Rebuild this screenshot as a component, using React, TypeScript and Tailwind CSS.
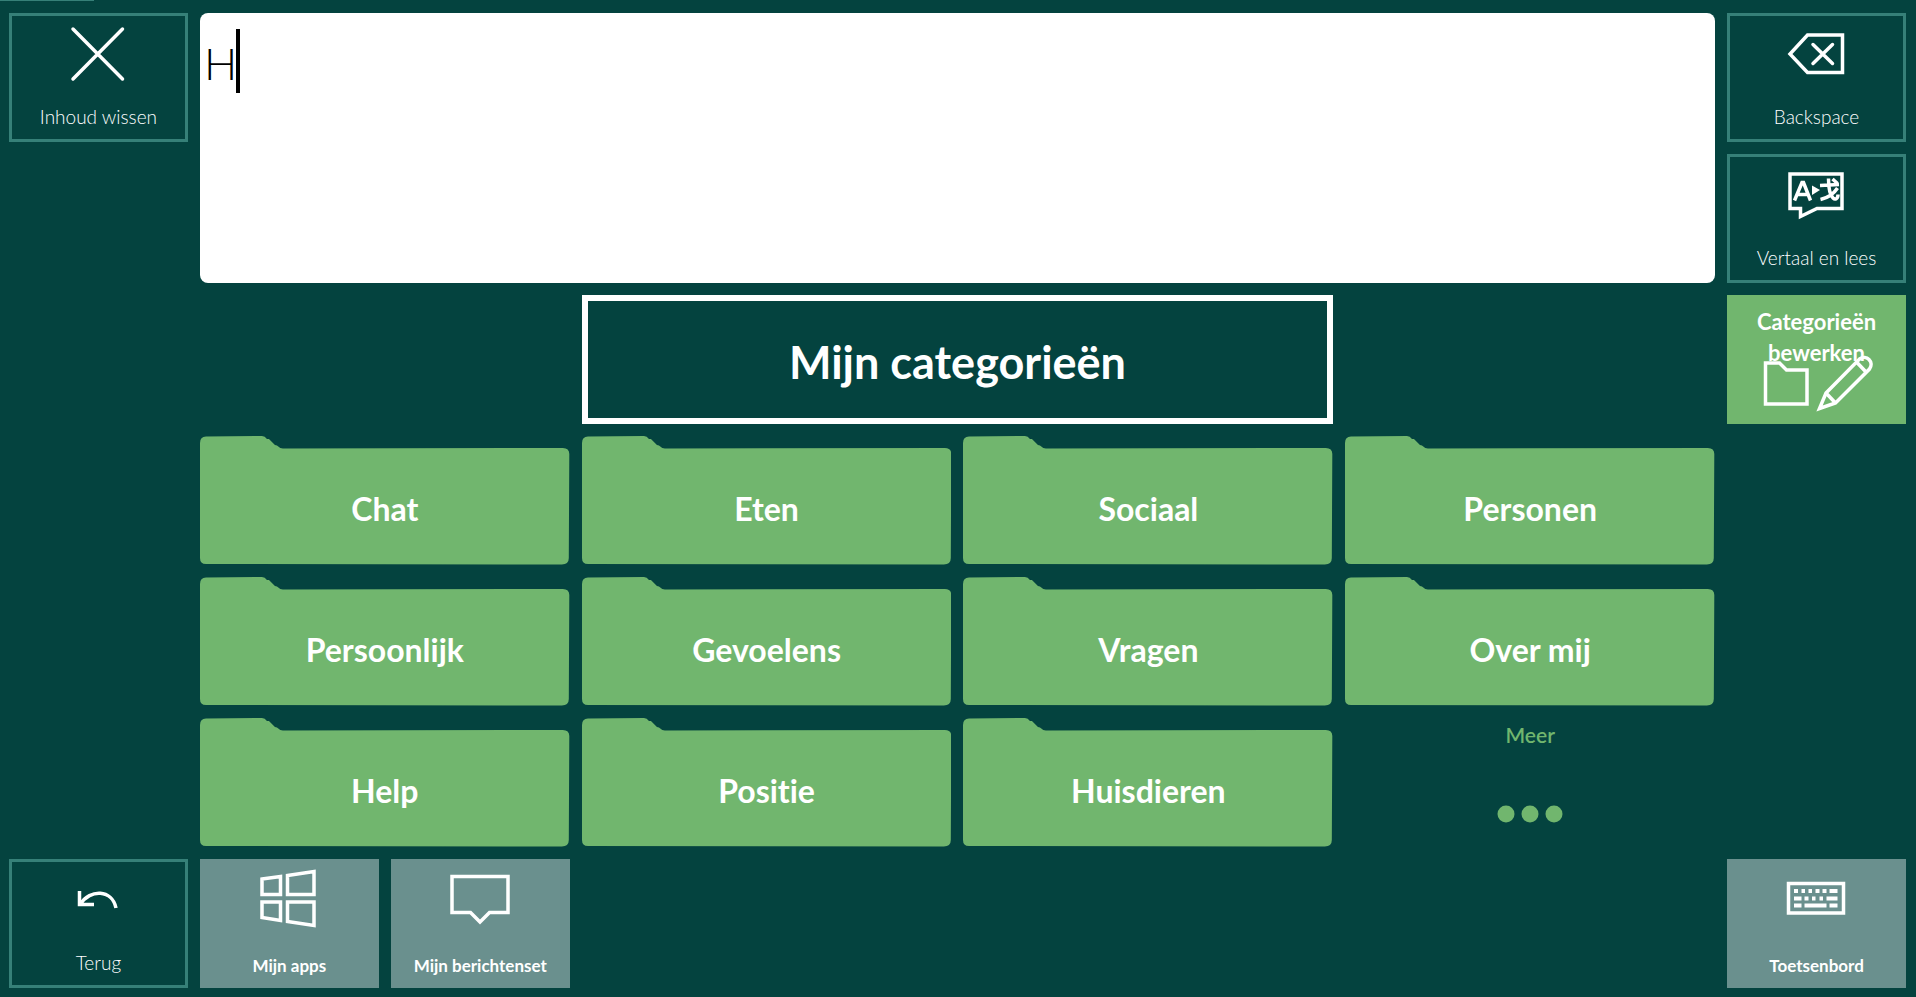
import React, { useState } from "react";

type TileProps = {
  label: string;
  icon: React.ReactNode;
  place: string;
};

function OutlineTile({ label, icon, place }: TileProps) {
  return (
    <button
      type="button"
      className={`flex flex-col items-center justify-between border-3 border-[#368078] pt-2 pb-[10px] text-[19px] leading-6 font-light ${place}`}
    >
      {icon}
      <span>{label}</span>
    </button>
  );
}

function SolidTile({ label, icon, place }: TileProps) {
  return (
    <button
      type="button"
      className={`flex flex-col items-center justify-between bg-[#6a908e] pt-2 pb-[10px] text-[17px] leading-6 font-bold ${place}`}
    >
      {icon}
      <span>{label}</span>
    </button>
  );
}

function Folder({ label }: { label: string }) {
  return (
    <button type="button" className="col-span-2 grid">
      <svg
        viewBox="0 0 370 129"
        preserveAspectRatio="none"
        className="h-full min-h-0 w-full [grid-area:1/1]"
        aria-hidden="true"
      >
        <path
          fill="#71b66e"
          d="M0 7Q0 .5 6 .5L62 0Q65 0 67 3L69 3L75 9L77 9.500Q80 12.500 83 12.500L363 12Q369.500 12 369.500 18L369 122Q369 128.500 362 128.500L6 128Q0 128 0 122Z"
        />
      </svg>
      <span className="self-center pt-4 text-[32px] leading-10 font-bold [grid-area:1/1]">
        {label}
      </span>
    </button>
  );
}

const iconProps = {
  width: 64,
  height: 64,
  viewBox: "0 0 64 64",
  fill: "none",
  stroke: "#fff",
  strokeWidth: 3.5,
  "aria-hidden": true,
} as const;

const CloseIcon = () => (
  <svg {...iconProps}>
    <path strokeLinecap="round" d="M7 5L56.500 55M56.500 5L7 55" />
  </svg>
);

const BackspaceIcon = () => (
  <svg {...iconProps}>
    <path d="M22.500 11H57.500V48.500H22.500L5 30Z" />
    <path strokeLinecap="round" d="M28 20.500L47.500 39.500M47.500 20.500L28 39.500" />
  </svg>
);

const TranslateIcon = () => (
  <svg {...iconProps}>
    <path d="M5 9H57V43.500H32L15.500 51.500V43.500H5Z" />
    <path d="M9.500 35.500L17 17.500H18.500L25.500 35.500M12 29.500H23" />
    <path fill="#fff" stroke="none" d="M27 20.500L35 25L27 30Z" />
    <path d="M35 20.500L54 19.500M43.500 13.500C43.500 22 44 29 48 33C50 35 53 34 53 29.500M52.500 23C48 30 42 33 35.500 34.500M47.500 14L52.500 18.500" />
  </svg>
);

const UndoIcon = () => (
  <svg {...iconProps}>
    <path d="M13.500 21V34.500H28" />
    <path d="M14.500 34C24 19 46 19 50 38" />
  </svg>
);

const WindowsIcon = () => (
  <svg {...iconProps}>
    <path d="M5 12L23.500 9.500V27.500H5ZM30.500 8.500L57 4.500V27.500H30.500ZM5 35H23.500V53.500L5 50.500ZM30.500 35H57V58.500L30.500 54.500Z" />
  </svg>
);

const MessageIcon = () => (
  <svg {...iconProps}>
    <path d="M4 9.500H60V45.500H41.500L32 55L22.500 45.500H4Z" />
  </svg>
);

const KeyboardIcon = () => (
  <svg {...iconProps}>
    <path d="M3.500 16.500H58.500V46H3.500Z" />
    <g strokeWidth="4">
      <path d="M9 24H13M16.500 24H20M23.500 24H27M30.500 24H34.500M37.500 24H41.500M44.500 24H52.500" />
      <path d="M9 31.500H16.500M19.500 31.500H23.500M27 31.500H30.500M34.500 31.500H38M41.500 31.500H52.500" />
      <path d="M9 38.500H16.500M19.500 38.500H41.500M44.500 38.500H52.500" />
    </g>
  </svg>
);

const EditCategoriesIcon = () => (
  <svg
    width="112"
    height="60"
    viewBox="0 0 112 60"
    fill="none"
    stroke="#fff"
    strokeWidth="3.500"
    aria-hidden="true"
  >
    <path d="M4.500 11H18.500L25.500 18H46V52H4.500Z" />
    <path d="M65 41L98.500 7C105.500 2 113.500 10 108.500 17L74.500 51L58.500 56.500ZM65 41L74.500 51M95.500 10L105 20" />
  </svg>
);

const categories = [
  "Chat",
  "Eten",
  "Sociaal",
  "Personen",
  "Persoonlijk",
  "Gevoelens",
  "Vragen",
  "Over mij",
  "Help",
  "Positie",
  "Huisdieren",
];

export default function App() {
  const [message, setMessage] = useState("H");

  return (
    <div className="relative bg-[#04433f] font-[Lato,'Noto_Sans',sans-serif] text-white [font-variant-ligatures:none]">
      <div className="absolute top-0 left-0 h-px w-[94px] bg-[#368078]" />
      <main className="grid min-h-screen grid-cols-10 grid-rows-7 gap-3 pt-[13px] pr-[10px] pb-[9px] pl-[9px]">
        <OutlineTile label="Inhoud wissen" icon={<CloseIcon />} place="col-start-1 row-start-1" />
        <div className="relative col-span-8 col-start-2 row-span-2 row-start-1">
          <textarea
            aria-label="Bericht"
            spellCheck={false}
            value={message}
            onChange={(e) => setMessage(e.target.value)}
            className="block h-full w-full resize-none rounded-lg bg-white px-1 pt-[18px] pb-4 text-[44px] leading-16 font-light text-black caret-transparent outline-none"
          />
          <span className="absolute top-4 left-9 h-16 w-1 bg-black" />
        </div>
        <OutlineTile label="Backspace" icon={<BackspaceIcon />} place="col-start-10 row-start-1" />
        <OutlineTile label="Vertaal en lees" icon={<TranslateIcon />} place="col-start-10 row-start-2" />

        <h1 className="col-span-4 col-start-4 row-start-3 flex items-center justify-center border-6 border-white pt-1 text-[45px] leading-14 font-bold">
          Mijn categorieën
        </h1>
        <button
          type="button"
          className="col-start-10 row-start-3 flex flex-col items-center bg-[#71b66e] pt-[11px] text-[22px] leading-[31px] font-bold"
        >
          <span>
            Categorieën
            <br />
            bewerken
          </span>
          <span className="-mt-4">
            <EditCategoriesIcon />
          </span>
        </button>

        <div className="col-span-8 col-start-2 row-span-3 row-start-4 grid grid-cols-subgrid grid-rows-subgrid">
          {categories.map((name) => (
            <Folder key={name} label={name} />
          ))}
          <button
            type="button"
            className="col-span-2 flex flex-col items-center justify-between pt-[3px] pb-6 text-[21px] leading-7 font-semibold text-[#71b66e]"
          >
            <span>Meer</span>
            <svg width="66" height="18" viewBox="0 0 66 18" fill="#71b66e" aria-hidden="true">
              <circle cx="9" cy="9" r="8.500" />
              <circle cx="33" cy="9" r="8.500" />
              <circle cx="57" cy="9" r="8.500" />
            </svg>
          </button>
        </div>

        <OutlineTile label="Terug" icon={<UndoIcon />} place="col-start-1 row-start-7" />
        <SolidTile label="Mijn apps" icon={<WindowsIcon />} place="col-start-2 row-start-7" />
        <SolidTile label="Mijn berichtenset" icon={<MessageIcon />} place="col-start-3 row-start-7" />
        <SolidTile label="Toetsenbord" icon={<KeyboardIcon />} place="col-start-10 row-start-7" />
      </main>
    </div>
  );
}
